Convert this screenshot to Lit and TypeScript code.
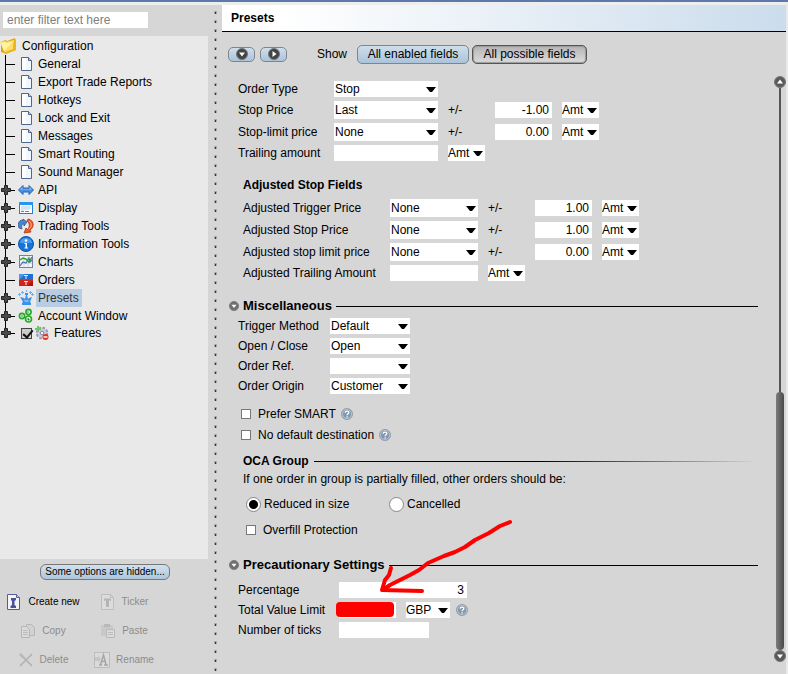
import { LitElement, html, css, svg, nothing, TemplateResult } from "lit";
import { customElement, state } from "lit/decorators.js";

type IconName = keyof typeof icons;

const icons = {
  folder: svg`<path d="M1 4l4-2 2 1 8-3 1 12-10 4L1 14z" fill="#e0a91c"/><path d="M0 4l5-1 1 1 8-2-1 10-8 3z" fill="#ffdf5e"/><path d="M1 5l4-1 1 1 7-1-9 9z" fill="#fff3a8"/><path d="M14 2l2-1v11l-10 3-1-1 8-3z" fill="#e9b62a"/>`,
  doc: svg`<path d="M3.500 1.500h7l3 3v10h-10z" fill="#f1f7fe" stroke="#4e6791"/><path d="M4 2h4v12H4z" fill="#fff"/><path d="M10.500 1.500v3h3" fill="#b9cdea" stroke="#4e6791"/>`,
  api: svg`<path d="M.5 8L5 3.500V6h6V3.500L15.500 8 11 12.500V10H5v2.500z" fill="#4d8fdc" stroke="#2465ad"/><path d="M2 7.500L4.500 5v2h7V5L14 7.500z" fill="#8cc0f5"/>`,
  display: svg`<rect x="1.500" y="2.500" width="13" height="11" fill="#fff" stroke="#1e7fd6"/><path d="M1 2h14v3H1z" fill="#2a93ea"/><path d="M3 6h10v3L3 11z" fill="#cfe6f8"/><path d="M3 11h3v1H3zM7 11h4v1H7z" fill="#5b88b0"/>`,
  tools: svg`<path d="M1 10C-1 5 2 1 5 2.500V1l4 3-3 4V6C4 6 3 7 4 11z" fill="#4a86cc" stroke="#24559a" stroke-width=".8"/><path d="M10 1c6 1 7 8 2 11l1 2-7 1 2-5 1.500 1.500C12 9 12 5 9 3z" fill="#f0592b" stroke="#b5320f" stroke-width=".8"/><path d="M11 3c3 2 3 6 0 8" fill="none" stroke="#ffb08a"/>`,
  info: svg`<circle cx="8" cy="8" r="7.500" fill="#1673d8" stroke="#0b55ad"/><path d="M2 7a6 5 0 0 1 12 0z" fill="#4b9cf0"/><circle cx="8" cy="4.500" r="1.200" fill="#fff"/><path d="M6.500 7H9v4.500h1v1H6.500v-1h1V8h-1z" fill="#fff"/>`,
  charts: svg`<rect x="1.500" y="1.500" width="13" height="12" fill="#f3f5fb" stroke="#7780a0"/><path d="M2 5h12M2 9h12M6 2v11M10 2v11" stroke="#c8cfe2"/><path d="M2 12l3-4 3 1 3-5 1 4 2-2" fill="none" stroke="#4b6fae" stroke-width="1.200"/><path d="M2 6l3-2 3 1 3 3 3-5" fill="none" stroke="#27a32b" stroke-width="1.400"/>`,
  orders: svg`<path d="M1 2h14v6H1z" fill="#1f6fd0"/><path d="M1 8h14v6H1z" fill="#d3241a"/><path d="M1 2h6L1 8z" fill="#4b97ea"/><path d="M15 14V9l-6 5z" fill="#b0140c"/><path d="M6 3.500h4M8 3.500v3.500M6 9.500h4M8 9.500v3.500" stroke="#e4edf7"/>`,
  presets: svg`<path d="M4 15h9v-2l-1-1 2-5-3 1-1 1-1-4h1V3H7v2h1L7 9 6 8 2 7l3 5-1 1z" fill="#3c93ee"/><path d="M0 4.500h3M1.500 3v3M13 4.500h3M14.500 3v3M3 2.500h3M4.500 1v3M11 2.500h3M12.500 1v3M8.500 0v2" stroke="#6db2f7"/><path d="M6 10h5l-1 2H7z" fill="#7dbaf7"/>`,
  account: svg`<g fill="#e9f9e6" stroke="#27a62c" stroke-width="1.600"><circle cx="4" cy="8" r="2.600"/><circle cx="10.500" cy="4" r="2.600"/><circle cx="10.500" cy="11" r="3"/></g><path d="M3 8h2M10 3v2M10 10v2h1.500" stroke="#27a62c"/>`,
  features: svg`<circle cx="8" cy="8" r="5" fill="#c9cbdd" stroke="#9496b3" stroke-width="2.500" stroke-dasharray="2.500 1.400"/><circle cx="8" cy="8" r="4.500" fill="#c9cbdd"/><circle cx="8" cy="8" r="1.800" fill="#f2f2f8" stroke="#8487a3"/><path d="M1 4h6M4 1v6" stroke="#6cc95e" stroke-width="2"/><circle cx="11.500" cy="12" r="3" fill="#e2341e"/><path d="M9.500 12h4" stroke="#fff" stroke-width="1.400"/>`,
  create: svg`<path d="M1.500.5h9l3 3v12h-12z" fill="#f3f3fa" stroke="#555c9c"/><path d="M10.500.5v3h3" fill="#c5c9e4" stroke="#555c9c"/><path d="M5 4h5v2L8.500 7v4l1.500 1v2H4.500v-2L6 11V7L5 6z" fill="#4b529a"/>`,
  ticker: svg`<path d="M1.500.5h9l3 3v12h-12z" fill="#dcdcdc" stroke="#bdbdbd"/><path d="M10.500.5v3h3" fill="none" stroke="#bdbdbd"/><path d="M4 4.500h7v2.500h-1l-.5-1H9v7H6V6h-.5l-.5 1H4z" fill="#b4b4b4"/>`,
  copy: svg`<path d="M6.500 1.500h5l3 3v8h-8z" fill="#d2d2d2" stroke="#b6b6b6"/><path d="M1.500 3.500h5l3 3v8h-8z" fill="#dadada" stroke="#b6b6b6"/><path d="M3 7.500h5M3 9.500h5M3 11.500h5" stroke="#bdbdbd"/>`,
  paste: svg`<path d="M1 2h12v11H1z" fill="#c9c9c9"/><path d="M4 1h6v3H4z" fill="#b9b9b9"/><path d="M6.500 6.500h8v8h-8z" fill="#dadada" stroke="#b9b9b9"/><path d="M8 9.500h5M8 11.500h5" stroke="#bdbdbd"/>`,
  remove: svg`<path d="M2 2l12 12M14 2L2 14" stroke="#b0b0b0" stroke-width="1.500"/><path d="M2 2l4 4" stroke="#b9b9b9" stroke-width="2.500"/>`,
  rename: svg`<rect x=".5" y=".5" width="15" height="15" fill="#dbdbdb" stroke="#bcbcbc"/><path d="M1 5h3V3l3 4-3 4V9H1z" fill="#c6c6c6"/><path d="M5 13h3M10 13h4M6.500 12.500L9.500 3 12 12.500M7.500 9.500h4" fill="none" stroke="#a6a6a6" stroke-width="1.500"/>`,
};

const icon = (name: IconName) =>
  html`<svg class="icon" viewBox="0 0 16 16" aria-hidden="true">${icons[name]}</svg>`;

const disc = (points: string, tone = "#5a5a5a") => html`<svg class="disc" viewBox="0 0 12 12" aria-hidden="true">
  <circle cx="6" cy="6" r="5.500" fill=${tone} stroke="#777"></circle>
  <polygon points=${points} fill="#fff"></polygon>
</svg>`;
const DOWN = "3,4.500 9,4.500 6,8.500";
const UP = "3,7.500 9,7.500 6,3.500";
const RIGHT = "4.500,3 8.500,6 4.500,9";

const help = (topic: string) => html`<button class="help" type="button" aria-label=${"Help: " + topic}>
  <svg viewBox="0 0 12 12" aria-hidden="true">
    <circle cx="6" cy="6" r="5.500" fill="#8097b0" stroke="#9a9fa5"></circle>
    <circle cx="6" cy="6" r="4.500" fill="none" stroke="#c3ced9" stroke-width=".8"></circle>
    <path d="M4.200 4.800C4.200 2.600 8 2.700 7.800 4.700 7.700 5.800 6.100 5.900 6.100 7.300M6.100 8.200v1.200" fill="none" stroke="#fff" stroke-width="1.300"></path>
  </svg>
</button>`;

interface Node { label: string; icon: IconName; branch?: boolean; check?: boolean }
const nodes: Node[] = [
  { label: "General", icon: "doc" },
  { label: "Export Trade Reports", icon: "doc" },
  { label: "Hotkeys", icon: "doc" },
  { label: "Lock and Exit", icon: "doc" },
  { label: "Messages", icon: "doc" },
  { label: "Smart Routing", icon: "doc" },
  { label: "Sound Manager", icon: "doc" },
  { label: "API", icon: "api", branch: true },
  { label: "Display", icon: "display", branch: true },
  { label: "Trading Tools", icon: "tools", branch: true },
  { label: "Information Tools", icon: "info", branch: true },
  { label: "Charts", icon: "charts", branch: true },
  { label: "Orders", icon: "orders" },
  { label: "Presets", icon: "presets", branch: true },
  { label: "Account Window", icon: "account", branch: true },
  { label: "Features", icon: "features", branch: true, check: true },
];

const actions: { label: string; icon: IconName; enabled?: boolean }[] = [
  { label: "Create new", icon: "create", enabled: true },
  { label: "Ticker", icon: "ticker" },
  { label: "Copy", icon: "copy" },
  { label: "Paste", icon: "paste" },
  { label: "Delete", icon: "remove" },
  { label: "Rename", icon: "rename" },
];

const select = (id: string, value: string, size: string, aria?: string) => html`<span class="select ${size}">
  <select id=${id} aria-label=${aria ?? nothing}><option>${value}</option></select>
</span>`;

const offsetRow = (id: string, label: string, value: string, amount: string) => html`<div class="row">
  <label for=${id}>${label}</label>
  ${select(id, value, "wide tall")}
  <span class="sign">+/-</span>
  <input class="amount" .value=${amount} aria-label=${label + " offset"} />
  ${select(id + "-unit", "Amt", "unit", label + " unit")}
</div>`;

const trailingRow = (id: string, label: string) => html`<div class="row">
  <label for=${id}>${label}</label>
  <input id=${id} class="wide" />
  ${select(id + "-unit", "Amt", "unit", label + " unit")}
</div>`;

const selectRow = (id: string, label: string, value: string, size: string) => html`<div class="row">
  <label for=${id}>${label}</label>${select(id, value, size)}
</div>`;

@customElement("app-root")
export class AppRoot extends LitElement {
  @state() private current = "Presets";

  static styles = css`
    :host {
      display: grid;
      grid-template-columns: 208px 14px minmax(0, 1fr);
      box-sizing: border-box;
      min-height: 100vh;
      border-top: 2px solid #5d78aa;
      background: #d6d6d6;
      font: 12px/16px "Liberation Sans", Arial, sans-serif;
      color: #000;
    }
    * { box-sizing: border-box; }
    button, input, select { font: inherit; color: inherit; margin: 0; padding: 0; border: 0; border-radius: 0; }
    button { background: none; }
    svg { display: block; }
    .icon { width: 16px; height: 16px; flex: none; }
    .disc { width: 12px; height: 12px; flex: none; }

    .side, .main { display: flex; flex-direction: column; border-top: 3px solid #eee; }
    .filter { width: 145px; height: 16px; margin: 7px 3px 8px; padding: 0 4px; background: #fff; }
    .filter::placeholder { color: #808080; opacity: 1; }
    .tree { flex: 1; margin: 0; padding: 1px 0 0; list-style: none; background: #e9e9e9; }
    .tree li { display: flex; align-items: center; height: 18px; gap: 2px; }
    .tree .last { height: 16px; }
    .tree .root { gap: 4px; }
    .guide { width: 16px; height: 18px; flex: none; }
    .name { padding: 0 3px 0 2px; height: 18px; white-space: nowrap; }
    .on { background: #b8cde4; color: #333; }
    .hidden-note {
      width: 130px; height: 16px; margin: 5px 0 7px 40px;
      border: 1px solid #777; border-radius: 6px; font-size: 10px; line-height: 12px;
      background: linear-gradient(#d3e1ee, #aec5dc); white-space: nowrap;
    }
    .actions { display: grid; grid-template-columns: 82px 80px; grid-auto-rows: 29px; padding: 0 0 0 2px; }
    .actions button {
      display: flex; align-items: center; justify-content: center; gap: 6px; white-space: nowrap;
      font-size: 10px;
    }
    .actions button:disabled { color: #8c8c8c; }

    .split { border-top: 3px solid #eee; }
    .split svg { width: 14px; height: 100%; }
    .split div { height: 0; min-height: 100%; overflow: hidden; }

    .main { border-right: 2px solid #e9e9e9; }
    .title {
      margin: 0; padding: 5px 9px; height: 27px; font-size: 12px; line-height: 16px;
      border-bottom: 1px solid #000; background: linear-gradient(90deg, #fff 10%, #cbdcec);
    }
    .bar { display: flex; align-items: center; gap: 3px; height: 44px; padding-left: 6px; }
    .pill, .mode {
      display: flex; align-items: center; justify-content: center;
      border: 1px solid #7d868e; background: linear-gradient(#cfdeeb, #abc3da); white-space: nowrap;
    }
    .pill { width: 27px; height: 15px; border-radius: 5px; margin-right: 2px; }
    .show { width: 40px; margin-left: 25px; }
    .show + .mode { margin-left: -3px; }
    .mode { width: 112px; height: 19px; border-radius: 5px; }
    .pressed {
      width: 115px; border-color: #555; background: linear-gradient(#b4b4b4, #dcdcdc);
      box-shadow: inset 0 0 1px 1px #999;
    }

    .body { display: flex; flex: 1; gap: 15px; }
    form { position: relative; flex: 1; min-width: 0; padding: 5px 0 36px 16px; }
    .group { display: flex; flex-direction: column; gap: 4px; }
    .row { display: flex; align-items: center; gap: 10px; min-height: 16px; }
    .row > label { width: var(--label); flex: none; white-space: nowrap; }
    .stop { --label: 86px; --wide: 104px; }
    .adjusted { --label: 137px; --wide: 88px; margin-left: 5px; }
    .misc { --label: 82px; --wide: 80px; }
    .caution { --label: 91px; --wide: 128px; }
    .row input { height: 16px; background: #fff; padding: 0 3px; text-align: right; }
    .select { position: relative; display: flex; height: 16px; }
    .tall { height: 18px; }
    .wide { width: var(--wide); }
    .unit { width: 37px; }
    .currency { width: 44px; }
    .amount { width: 57px; }
    .ticks { width: 90px; }
    .sign { width: 37px; }
    .select select { width: 100%; padding-left: 1px; background: #fff; appearance: none; }
    .unit select, .currency select { padding-left: 0; }
    .select::after {
      content: ""; position: absolute; right: 2px; top: calc(50% - 2px); width: 10px; height: 5px;
      background: #000; clip-path: polygon(0 0, 100% 0, 60% 100%, 40% 100%); pointer-events: none;
    }
    .help { width: 12px; height: 12px; }
    .caution .help { margin-left: -4px; }
    h2 { margin: 16px 0 6px 5px; font-size: 12px; line-height: 16px; }
    h3 { display: flex; align-items: center; gap: 4px; margin: 17px 0 4px -9px; font-size: 13px; line-height: 16px; }
    h3 .disc { width: 10px; height: 10px; }
    h3::after, .oca::after { content: ""; flex: 1; height: 1px; background: #000; }
    .oca { display: flex; align-items: center; gap: 5px; margin: 10px 0 2px 5px; }
    .oca::after { background: linear-gradient(90deg, #000 50%, transparent); }
    .spaced { margin: 19px 0 9px -9px; }
    .tick { display: flex; align-items: center; gap: 5px; height: 16px; margin: 5px 0 0 3px; }
    .tick:first-child { margin-top: 12px; }
    .tick label, .choices label { display: flex; align-items: center; }
    .tick label { gap: 7px; }
    .box { appearance: none; width: 10px; height: 10px; flex: none; background: #fff; border: 1px solid #777; }
    .tree .box { position: relative; width: 11px; height: 11px; margin: 0 0 0 3px; border: 1px solid #444; background: #ccc; }
    .tree .box:checked::after {
      content: ""; position: absolute; left: 3px; top: -1px; width: 4px; height: 8px;
      border: solid #111; border-width: 0 2px 2px 0; transform: rotate(40deg);
    }
    p { margin: 0 0 9px 5px; }
    .choices { display: grid; grid-template-columns: 143px 143px; margin-left: 8px; }
    .choices label { gap: 3px; }
    .radio { appearance: none; width: 15px; height: 15px; border: 1px solid #888; border-radius: 50%; background: #fff; }
    .radio:checked { background: radial-gradient(circle, #000 4px, #fff 5px); }
    .overfill { margin: 10px 0 0 8px; }
    .markup { position: absolute; left: 106px; top: 436px; width: 200px; height: 120px; pointer-events: none; }

    .scroll { display: flex; flex-direction: column; align-items: center; width: 13px; padding-bottom: 12px; }
    .track { flex: 303; width: 2px; background: #555; }
    .thumb { flex: 258; width: 8px; border-radius: 4px; background: linear-gradient(90deg, #7c7c7c, #4a4a4a); }
    .scroll button { height: 12px; }
  `;

  private guide(branch = false, last = false) {
    return html`<svg class="guide" viewBox="0 0 16 18" aria-hidden="true">
      <path d=${last ? "M5.500 0V9" : "M5.500 0V18"} stroke="#000"></path>
      <path d="M6 9.500h9" stroke="#000"></path>
      ${branch ? svg`<path d="M4.500 4.500h3v3h3v3h-3v3h-3v-3h-3v-3h3z" fill="#4a4a4a" stroke="#222"/>` : nothing}
    </svg>`;
  }

  private node(n: Node, i: number): TemplateResult {
    const last = i === nodes.length - 1;
    return html`<li class=${last ? "last" : ""}>
      ${this.guide(n.branch, last)}
      ${n.check ? html`<input class="box" type="checkbox" checked aria-label=${n.label} />` : nothing}
      ${icon(n.icon)}
      <button class="name ${n.label === this.current ? "on" : ""}" @click=${() => (this.current = n.label)}>${n.label}</button>
    </li>`;
  }

  render() {
    return html`
      <aside class="side">
        <input class="filter" placeholder="enter filter text here" aria-label="Filter" />
        <ul class="tree">
          <li class="root">${icon("folder")}<button class="name">Configuration</button></li>
          ${nodes.map((n, i) => this.node(n, i))}
        </ul>
        <button class="hidden-note">Some options are hidden...</button>
        <div class="actions">
          ${actions.map((a) => html`<button ?disabled=${!a.enabled}>${icon(a.icon)}${a.label}</button>`)}
        </div>
      </aside>
      <div class="split"><div>
        <svg aria-hidden="true">
          <defs>
            <pattern id="grip" width="14" height="9" patternUnits="userSpaceOnUse">
              <rect x="6" y="6" width="3" height="4" rx="1" fill="#a4a4a4"></rect>
              <rect x="7" y="7" width="1" height="2" fill="#333"></rect>
            </pattern>
          </defs>
          <rect width="14" height="100%" fill="url(#grip)"></rect>
        </svg>
      </div></div>
      <main class="main">
        <h1 class="title">Presets</h1>
        <div class="bar">
          <button class="pill" aria-label="Expand all">${disc(DOWN, "#444")}</button>
          <button class="pill" aria-label="Collapse all">${disc(RIGHT, "#444")}</button>
          <span class="show">Show</span>
          <button class="mode">All enabled fields</button>
          <button class="mode pressed">All possible fields</button>
        </div>
        <div class="body">
          <form>
            <div class="group stop">
              ${selectRow("type", "Order Type", "Stop", "wide")}
              ${offsetRow("stop", "Stop Price", "Last", "-1.00")}
              ${offsetRow("limit", "Stop-limit price", "None", "0.00")}
              ${trailingRow("trail", "Trailing amount")}
            </div>
            <h2>Adjusted Stop Fields</h2>
            <div class="group adjusted">
              ${offsetRow("atrigger", "Adjusted Trigger Price", "None", "1.00")}
              ${offsetRow("astop", "Adjusted Stop Price", "None", "1.00")}
              ${offsetRow("alimit", "Adjusted stop limit price", "None", "0.00")}
              ${trailingRow("atrail", "Adjusted Trailing Amount")}
            </div>
            <h3>${disc(DOWN, "#707070")}Miscellaneous</h3>
            <div class="group misc">
              ${selectRow("method", "Trigger Method", "Default", "wide")}
              ${selectRow("openclose", "Open / Close", "Open", "wide")}
              ${selectRow("ref", "Order Ref.", "", "wide")}
              ${selectRow("origin", "Order Origin", "Customer", "wide")}
            </div>
            <div>
              <div class="tick"><label><input class="box" type="checkbox" />Prefer SMART</label>${help("Prefer SMART")}</div>
              <div class="tick"><label><input class="box" type="checkbox" />No default destination</label>${help("No default destination")}</div>
            </div>
            <h2 class="oca">OCA Group</h2>
            <p id="oca">If one order in group is partially filled, other orders should be:</p>
            <div class="choices" role="radiogroup" aria-labelledby="oca">
              <label><input class="radio" type="radio" name="oca" checked />Reduced in size</label>
              <label><input class="radio" type="radio" name="oca" />Cancelled</label>
            </div>
            <div class="tick overfill"><label><input class="box" type="checkbox" />Overfill Protection</label></div>
            <h3 class="spaced">${disc(DOWN, "#707070")}Precautionary Settings</h3>
            <div class="group caution">
              <div class="row"><label for="pct">Percentage</label><input id="pct" class="wide" .value=${"3"} /></div>
              <div class="row">
                <label for="total">Total Value Limit</label><input id="total" class="amount" />
                ${select("currency", "GBP", "currency", "Currency")}${help("Total Value Limit")}
              </div>
              <div class="row"><label for="ticks">Number of ticks</label><input id="ticks" class="ticks" /></div>
            </div>
            <svg class="markup" viewBox="328 512 200 120" aria-hidden="true">
              <rect x="336" y="602" width="58" height="15" rx="4" fill="#f00"></rect>
              <g fill="none" stroke="#f00" stroke-width="4" stroke-linejoin="round" stroke-linecap="round">
                <path d="M510 522L500 526 489 533 475 540 465 547 455 552 444 556 428 563 419 570 410 575 398 581 390 585 383 590"></path>
                <path d="M391 568L389 575 385 580 382 590 422 591"></path>
              </g>
            </svg>
          </form>
          <div class="scroll">
            <button aria-label="Scroll up">${disc(UP)}</button>
            <div class="track"></div>
            <div class="thumb"></div>
            <button aria-label="Scroll down">${disc(DOWN)}</button>
          </div>
        </div>
      </main>
    `;
  }
}
